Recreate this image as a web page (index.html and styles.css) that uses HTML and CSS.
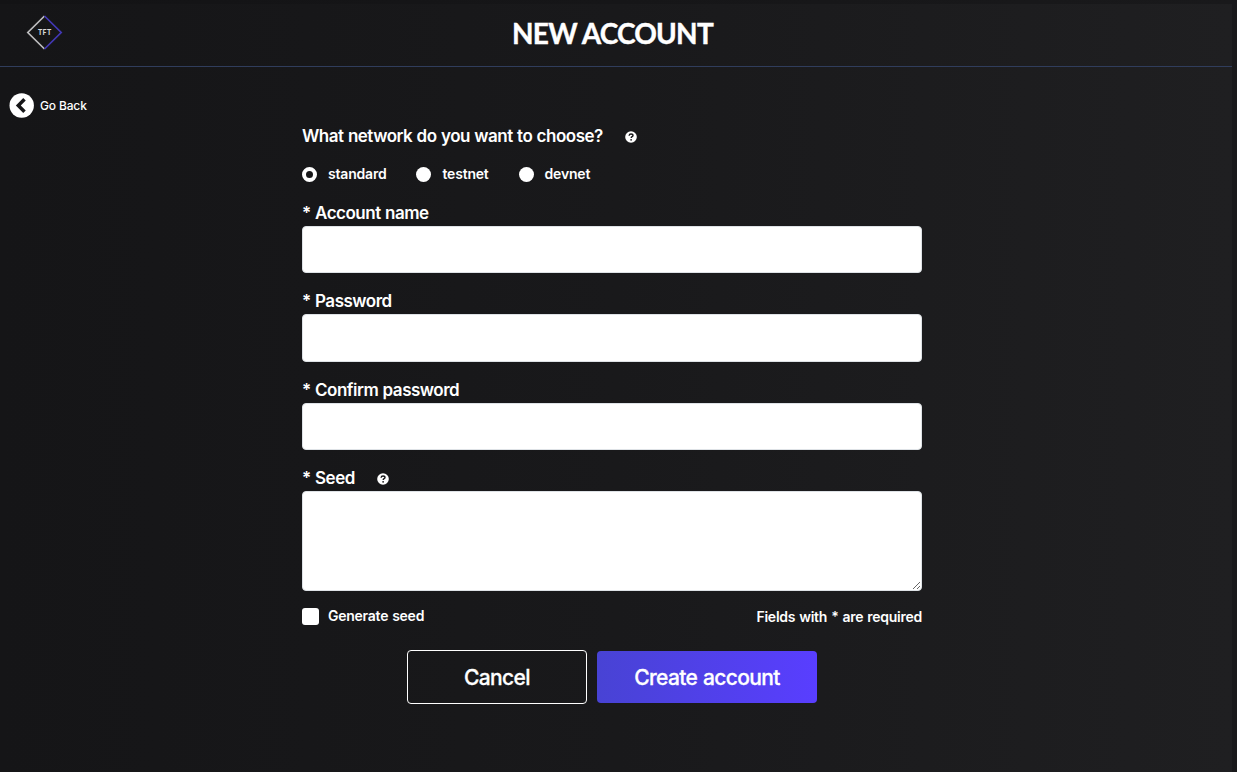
FILE: index.html
```
<!DOCTYPE html>
<html lang="en">
<head>
<meta charset="utf-8">
<title>New account</title>
<link rel="stylesheet" href="styles.css">
</head>
<body>
<div class="app">
  <header class="header">
    <svg class="logo" width="38" height="38" viewBox="0 0 38 38" fill="none" stroke-width="1.7">
      <path d="M19.500 2 2.800 18.500 19.500 35" stroke="#bdbdbf"/>
      <path d="M19.500 2 36.200 18.500 19.500 35" stroke="#4338b5"/>
      <text class="logo-text" x="19.800" y="21" text-anchor="middle">TFT</text>
    </svg>
    <h1 class="title">NEW ACCOUNT</h1>
  </header>
  <a class="back">
    <svg width="25" height="25" viewBox="0 0 25 25"><circle cx="12.7" cy="12.5" r="12.2" fill="#fff"/><path d="M15.500 6.200 9.300 12.500 15.500 18.800" fill="none" stroke="#161618" stroke-width="3.500"/></svg>
    <span class="back-label">Go Back</span>
  </a>
  <form class="form">
    <div class="label network-label"><span>What network do you want to choose?</span>
      <svg class="help" width="12" height="12" viewBox="0 0 12 12"><circle cx="6" cy="6" r="5.8" fill="#fff"/><path d="M4.1 4.7C4.2 3.5 5 3 6 3c1.200 0 2 .6 2 1.500C8 5.700 6.200 5.600 6.200 6.900" fill="none" stroke="#161618" stroke-width="1.400"/><circle cx="6.100" cy="8.800" r=".9" fill="#161618"/></svg>
    </div>
    <div class="radios">
      <label class="radio"><span class="dot checked"></span><span>standard</span></label>
      <label class="radio"><span class="dot"></span><span>testnet</span></label>
      <label class="radio"><span class="dot"></span><span>devnet</span></label>
    </div>
    <div class="field name"><label class="label">* Account name</label><input class="input" type="text"></div>
    <div class="field password"><label class="label">* Password</label><input class="input tall" type="password"></div>
    <div class="field confirm"><label class="label">* Confirm password</label><input class="input" type="password"></div>
    <div class="field seed"><label class="label">* Seed
      <svg class="help" width="12" height="12" viewBox="0 0 12 12"><circle cx="6" cy="6" r="5.8" fill="#fff"/><path d="M4.1 4.7C4.2 3.5 5 3 6 3c1.200 0 2 .6 2 1.500C8 5.700 6.200 5.600 6.200 6.900" fill="none" stroke="#161618" stroke-width="1.400"/><circle cx="6.100" cy="8.800" r=".9" fill="#161618"/></svg></label>
      <textarea class="input area"></textarea></div>
    <div class="options">
      <label class="generate"><span class="box"></span><span>Generate seed</span></label>
      <span class="required">Fields with * are required</span>
    </div>
    <div class="actions">
      <button class="btn cancel" type="button">Cancel</button>
      <button class="btn create" type="button">Create account</button>
    </div>
  </form>
</div>
</body>
</html>
```
FILE: styles.css
```
* { box-sizing: border-box; }
body {
  margin: 0;
  height: 772px;
  padding: 4px 5px 0 0;
  overflow: hidden;
  background: linear-gradient(90deg, #131315, #19191b);
  color: #fff;
  font-family: Inter, "Liberation Sans", sans-serif;
}
.app { height: 768px; background: linear-gradient(90deg, #151517, #19191b 50%, #1f1f21); }
.header {
  height: 63px;
  border-bottom: 1px solid #303d5c;
  display: grid;
  grid-template-columns: 63px 1fr 70px;
  align-items: start;
}
.logo { margin: 10px 0 0 25px; }
.logo-text { font: 900 7px Lato, sans-serif; fill: #d8d8d8; stroke: none; letter-spacing: .4px; }
.title {
  margin: 11px 0 0;
  text-align: center;
  font: 700 28px/36px Lato, sans-serif;
  -webkit-text-stroke: .4px #fff;
  letter-spacing: -.8px;
}
.back { display: flex; align-items: center; gap: 6px; height: 25px; margin: 26px 0 0 9px; }
.back-label { font-size: 12px; font-weight: 500; letter-spacing: -.15px; }
.form { width: 620px; margin: 7px 0 0 302px; }
.label { display: flex; align-items: center; height: 20px; padding-top: 1px; font-size: 17px; line-height: 20px; font-weight: 600; letter-spacing: -.5px; word-spacing: .6px; white-space: nowrap; }
.help { margin: 2px 0 0 22px; flex: none; }
.radios { display: flex; gap: 30px; height: 20px; margin-top: 19px; font-size: 14px; line-height: 17px; font-weight: 600; letter-spacing: -.2px; }
.radio { display: flex; align-items: center; gap: 11px; }
.radio span:last-child, .generate span:last-child { padding-bottom: 1px; }
.dot { width: 15px; height: 15px; border-radius: 50%; background: #fff; }
.dot.checked { background: #161618; border: 4px solid #fff; }
.field.name { margin-top: 18px; }
.field.password, .field.confirm, .field.seed { margin-top: 17px; }
.field.password .label { height: 21px; padding-bottom: 1px; }
.input {
  display: block;
  width: 100%;
  height: 47px;
  margin: 4px 0 0;
  padding: 8px;
  border: 1px solid #dee2e6;
  border-radius: 4px;
  background: #fff;
  outline: none;
}
.input.tall { height: 48px; margin-top: 3px; }
.input.area { height: 100px; resize: vertical; }
.options { display: flex; justify-content: space-between; align-items: center; height: 20px; margin-top: 15px; font-size: 14px; line-height: 17px; font-weight: 600; letter-spacing: -.25px; word-spacing: .7px; }
.generate { display: flex; align-items: center; gap: 9px; }
.box { width: 17px; height: 17px; border-radius: 3px; background: #fff; }
.actions { display: flex; justify-content: center; align-items: center; gap: 10px; margin-top: 24px; height: 54px; }
.btn { border-radius: 4px; padding: 0; color: #fff; font: 500 21px Inter, "Liberation Sans", sans-serif; letter-spacing: -.65px; word-spacing: .8px; -webkit-text-stroke: .3px #fff; }
.cancel { width: 180px; height: 54px; border: 1px solid #fff; background: transparent; }
.create { width: 220px; height: 52px; border: 0; background: linear-gradient(90deg, #4843d4, #593eff); }
```
